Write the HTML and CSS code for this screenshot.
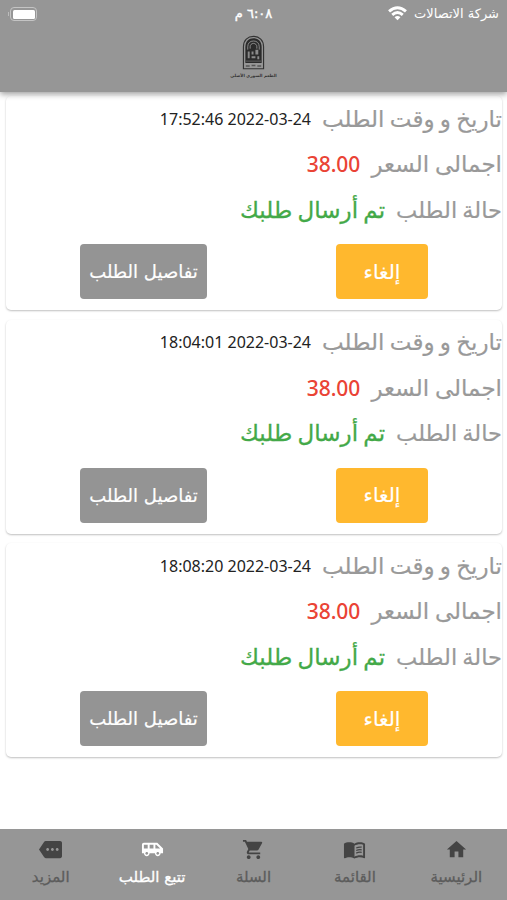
FILE: index.html
```html
<!DOCTYPE html>
<html lang="ar" dir="rtl">

<head>
    <meta charset="UTF-8">
    <meta name="viewport" content="width=device-width, initial-scale=1.0">
    <title>تتبع الطلب</title>
    <link rel="stylesheet" href="styles.css">
</head>

<body>
    <header class="app-header">
        <div class="status-bar">
            <div class="carrier">
                <span>شركة الاتصالات</span>
                <svg class="wifi" viewBox="0 0 18 14">
                    <path d="M1 5 Q9 -2 17 5" />
                    <path d="M4 8.2 Q9 4 14 8.2" />
                    <path class="dot" d="M6.2 10.5 Q9 8.3 11.8 10.5 L9 13.5 Z" />
                </svg>
            </div>
            <div class="clock">٦:٠٨ م</div>
            <div class="battery-wrap">
                <div class="battery"></div>
                <div class="battery-cap"></div>
            </div>
        </div>
        <div class="logo">
            <svg viewBox="0 0 24 36">
                <path d="M1.5 35V12C1.5 5 6 1.2 12 1.2S22.500 5 22.500 12V35Z" fill="none" stroke="#333" stroke-width="1.200" />
                <path d="M3.500 29V12.500C3.500 6.500 7 3.200 12 3.200S20.500 6.500 20.500 12.500V29Z" fill="#2b2b2b" />
                <path d="M6 15V12C6 8 8.500 6 12 6S18 8 18 12V15M8.500 14V12C8.500 10 10 8.500 12 8.500S15.500 10 15.500 12V14" fill="none" stroke="#999" stroke-width=".9" />
                <path d="M6 17H8V24H6ZM10 17H12V20H10ZM14 15H17V20H14ZM10 22H14V24H10ZM16 22H18V25H16Z" fill="#8a8a8a" />
                <path d="M4 27H20M4 32H8M10 31.500H14M16 32H20" stroke="#555" stroke-width="1.500" />
            </svg>
            <span class="logo-text">الطعم السوري الأصلي</span>
        </div>
    </header>

    <main class="orders">
        <section class="order">
            <div class="row"><span class="label label-date">تاريخ و وقت الطلب</span><span class="date">2022-03-24 17:52:46</span></div>
            <div class="row"><span class="label label-price">اجمالى السعر</span><span class="price">38.00</span></div>
            <div class="row"><span class="label label-state">حالة الطلب</span><span class="state">تم أرسال طلبك</span></div>
            <div class="actions">
                <button class="btn cancel">إلغاء</button>
                <button class="btn details">تفاصيل الطلب</button>
            </div>
        </section>
        <section class="order">
            <div class="row"><span class="label label-date">تاريخ و وقت الطلب</span><span class="date">2022-03-24 18:04:01</span></div>
            <div class="row"><span class="label label-price">اجمالى السعر</span><span class="price">38.00</span></div>
            <div class="row"><span class="label label-state">حالة الطلب</span><span class="state">تم أرسال طلبك</span></div>
            <div class="actions">
                <button class="btn cancel">إلغاء</button>
                <button class="btn details">تفاصيل الطلب</button>
            </div>
        </section>
        <section class="order">
            <div class="row"><span class="label label-date">تاريخ و وقت الطلب</span><span class="date">2022-03-24 18:08:20</span></div>
            <div class="row"><span class="label label-price">اجمالى السعر</span><span class="price">38.00</span></div>
            <div class="row"><span class="label label-state">حالة الطلب</span><span class="state">تم أرسال طلبك</span></div>
            <div class="actions">
                <button class="btn cancel">إلغاء</button>
                <button class="btn details">تفاصيل الطلب</button>
            </div>
        </section>
    </main>

    <nav class="tabs">
        <a class="tab">
            <svg viewBox="0 0 24 24"><path d="M10 20v-6h4v6h5v-8h3L12 3 2 12h3v8z" /></svg>
            <span>الرئيسية</span>
        </a>
        <a class="tab">
            <svg viewBox="0 0 24 24">
                <path d="M21 5c-1.110-.35-2.330-.5-3.500-.5-1.950 0-4.050.4-5.500 1.500-1.450-1.100-3.550-1.500-5.500-1.500S2.450 4.900 1 6v14.650c0 .25.25.5.5.5.1 0 .15-.05.25-.05C3.100 20.450 5.050 20 6.500 20c1.950 0 4.050.4 5.500 1.500 1.350-.85 3.800-1.500 5.500-1.500 1.650 0 3.350.3 4.750 1.050.1.05.15.05.25.05.25 0 .5-.25.5-.5V6c-.6-.45-1.250-.75-2-1zm0 13.500c-1.100-.35-2.300-.5-3.500-.5-1.700 0-4.150.65-5.500 1.500V8c1.350-.85 3.800-1.500 5.500-1.500 1.200 0 2.400.15 3.500.5v11.500z" />
                <path d="M13.800 10.400Q16.500 9 19.500 9.600M13.800 13.100Q16.500 11.700 19.500 12.300M13.800 15.800Q16.500 14.400 19.500 15" fill="none" stroke="#444" stroke-width="1.300" />
            </svg>
            <span>القائمة</span>
        </a>
        <a class="tab">
            <svg viewBox="0 0 24 24"><path d="M7 18c-1.100 0-1.990.9-1.990 2S5.900 22 7 22s2-.9 2-2-.9-2-2-2zM1 2v2h2l3.600 7.590-1.350 2.450c-.16.28-.25.61-.25.96 0 1.100.9 2 2 2h12v-2H7.420c-.14 0-.25-.11-.25-.25l.03-.12.9-1.630h7.450c.75 0 1.410-.41 1.750-1.030l3.580-6.490A1.003 1.003 0 0 0 20 4H5.210l-.94-2H1zm16 16c-1.100 0-1.990.9-1.990 2s.89 2 1.990 2 2-.9 2-2-.9-2-2-2z" /></svg>
            <span>السلة</span>
        </a>
        <a class="tab active">
            <svg viewBox="0 0 24 24"><path d="M17 5H3c-1.100 0-2 .89-2 2v9h2c0 1.650 1.340 3 3 3s3-1.350 3-3h5.500c0 1.650 1.340 3 3 3s3-1.350 3-3H23v-5l-6-6zM3 11V7h4v4H3zm3 6.500c-.83 0-1.500-.67-1.500-1.500s.67-1.500 1.500-1.500 1.500.67 1.500 1.500-.67 1.500-1.500 1.500zM13 11H9V7h4v4zm4.500 6.500c-.83 0-1.500-.67-1.500-1.500s.67-1.500 1.500-1.500 1.500.67 1.500 1.500-.67 1.500-1.500 1.500zM15 11V7h1l4 4h-5z" /></svg>
            <span>تتبع الطلب</span>
        </a>
        <a class="tab">
            <svg viewBox="0 0 24 24"><path d="M22 3H7c-.69 0-1.230.35-1.590.88L0 12l5.410 8.110c.36.53.97.89 1.660.89H22c1.100 0 2-.9 2-2V5c0-1.100-.9-2-2-2zM9 13.500c-.83 0-1.500-.67-1.500-1.500s.67-1.500 1.500-1.500 1.500.67 1.500 1.500-.67 1.500-1.500 1.500zm5 0c-.83 0-1.500-.67-1.500-1.500s.67-1.500 1.500-1.500 1.500.67 1.500 1.500-.67 1.500-1.500 1.500zm5 0c-.83 0-1.500-.67-1.500-1.500s.67-1.500 1.500-1.500 1.500.67 1.500 1.500-.67 1.500-1.500 1.500z" /></svg>
            <span>المزيد</span>
        </a>
    </nav>
</body>

</html>
```
FILE: styles.css
```css
* {
    box-sizing: border-box;
}

body {
    margin: 0;
    height: 100vh;
    display: flex;
    flex-direction: column;
    overflow: hidden;
    background: #fff;
    font-family: "DejaVu Sans", sans-serif;
}

/* header */
.app-header {
    height: 92px;
    flex: none;
    background: #969696;
    box-shadow: 0 2px 6px rgba(0, 0, 0, .4);
    z-index: 1;
}

.status-bar {
    height: 27px;
    padding: 0 8px;
    display: grid;
    grid-template-columns: 1fr auto 1fr;
    align-items: center;
    color: #fff;
    font-size: 13px;
    white-space: nowrap;
}

.clock {
    -webkit-text-stroke: .4px;
}

.carrier {
    display: flex;
    align-items: center;
    gap: 7px;
}

.wifi {
    width: 19px;
    height: 15px;
    fill: none;
    stroke: #fff;
    stroke-width: 2.8;
}

.wifi .dot {
    fill: #fff;
    stroke: none;
}

.battery-wrap {
    display: flex;
    align-items: center;
    justify-content: flex-end;
    gap: 1px;
}

.battery {
    width: 27px;
    height: 14px;
    border: 1px solid #c4c4c4;
    border-radius: 4px;
    background: #fff content-box;
    padding: 1.5px;
}

.battery-cap {
    width: 1px;
    height: 4px;
    background: #bbb;
}

.logo {
    display: flex;
    flex-direction: column;
    align-items: center;
    padding-top: 7px;
}

.logo svg {
    width: 23px;
    height: 37px;
}

.logo-text {
    font-size: 4.2px;
    line-height: 10px;
    font-weight: bold;
    color: #333;
}

/* orders */
.orders {
    flex: 1;
    padding: 4px 5px 0 6px;
}

.order {
    height: 214px;
    margin-bottom: 9.5px;
    border-radius: 5px;
    background: #fff;
    box-shadow: 0 1px 2px rgba(0, 0, 0, .25);
}

.row {
    height: 45.5px;
    display: flex;
    align-items: center;
    gap: 11px;
    white-space: nowrap;
}

.label {
    color: #999;
    font-size: 23px;
    -webkit-text-stroke: .2px;
}

.label-date {
    word-spacing: -2px;
}

.label-price {
    word-spacing: -1.5px;
}

.label-state {
    font-size: 22.5px;
    word-spacing: -2px;
}

.date {
    font-family: "Noto Sans", sans-serif;
    font-size: 16px;
    color: #222;
}

.price {
    font-family: "Noto Sans", sans-serif;
    font-size: 21px;
    font-weight: 500;
    color: #ea4335;
}

.state {
    font-size: 23px;
    word-spacing: -2px;
    color: #43a948;
    -webkit-text-stroke: .3px;
}

.actions {
    display: flex;
    justify-content: space-between;
    padding: 11.5px 74px 0;
}

.btn {
    height: 55px;
    padding: 0;
    border: 0;
    border-radius: 4px;
    color: #fff;
    font: 18px "DejaVu Sans", sans-serif;
    -webkit-text-stroke: .2px;
    white-space: nowrap;
}

.cancel {
    width: 92px;
    font-size: 20px;
    background: #ffb82e;
}

.details {
    width: 127px;
    background: #949494;
}

/* bottom tabs */
.tabs {
    height: 71px;
    flex: none;
    display: grid;
    grid-template-columns: repeat(5, 1fr);
    background: #969696;
}

.tab {
    display: flex;
    flex-direction: column;
    align-items: center;
    padding-top: 9px;
    color: #5c5c5c;
    font-size: 15px;
    line-height: 32px;
    -webkit-text-stroke: .3px;
    white-space: nowrap;
}

.tab svg {
    width: 25px;
    height: 23px;
    fill: #444;
}

.tab.active {
    color: #fff;
}

.tab.active svg {
    fill: #fff;
}
```
